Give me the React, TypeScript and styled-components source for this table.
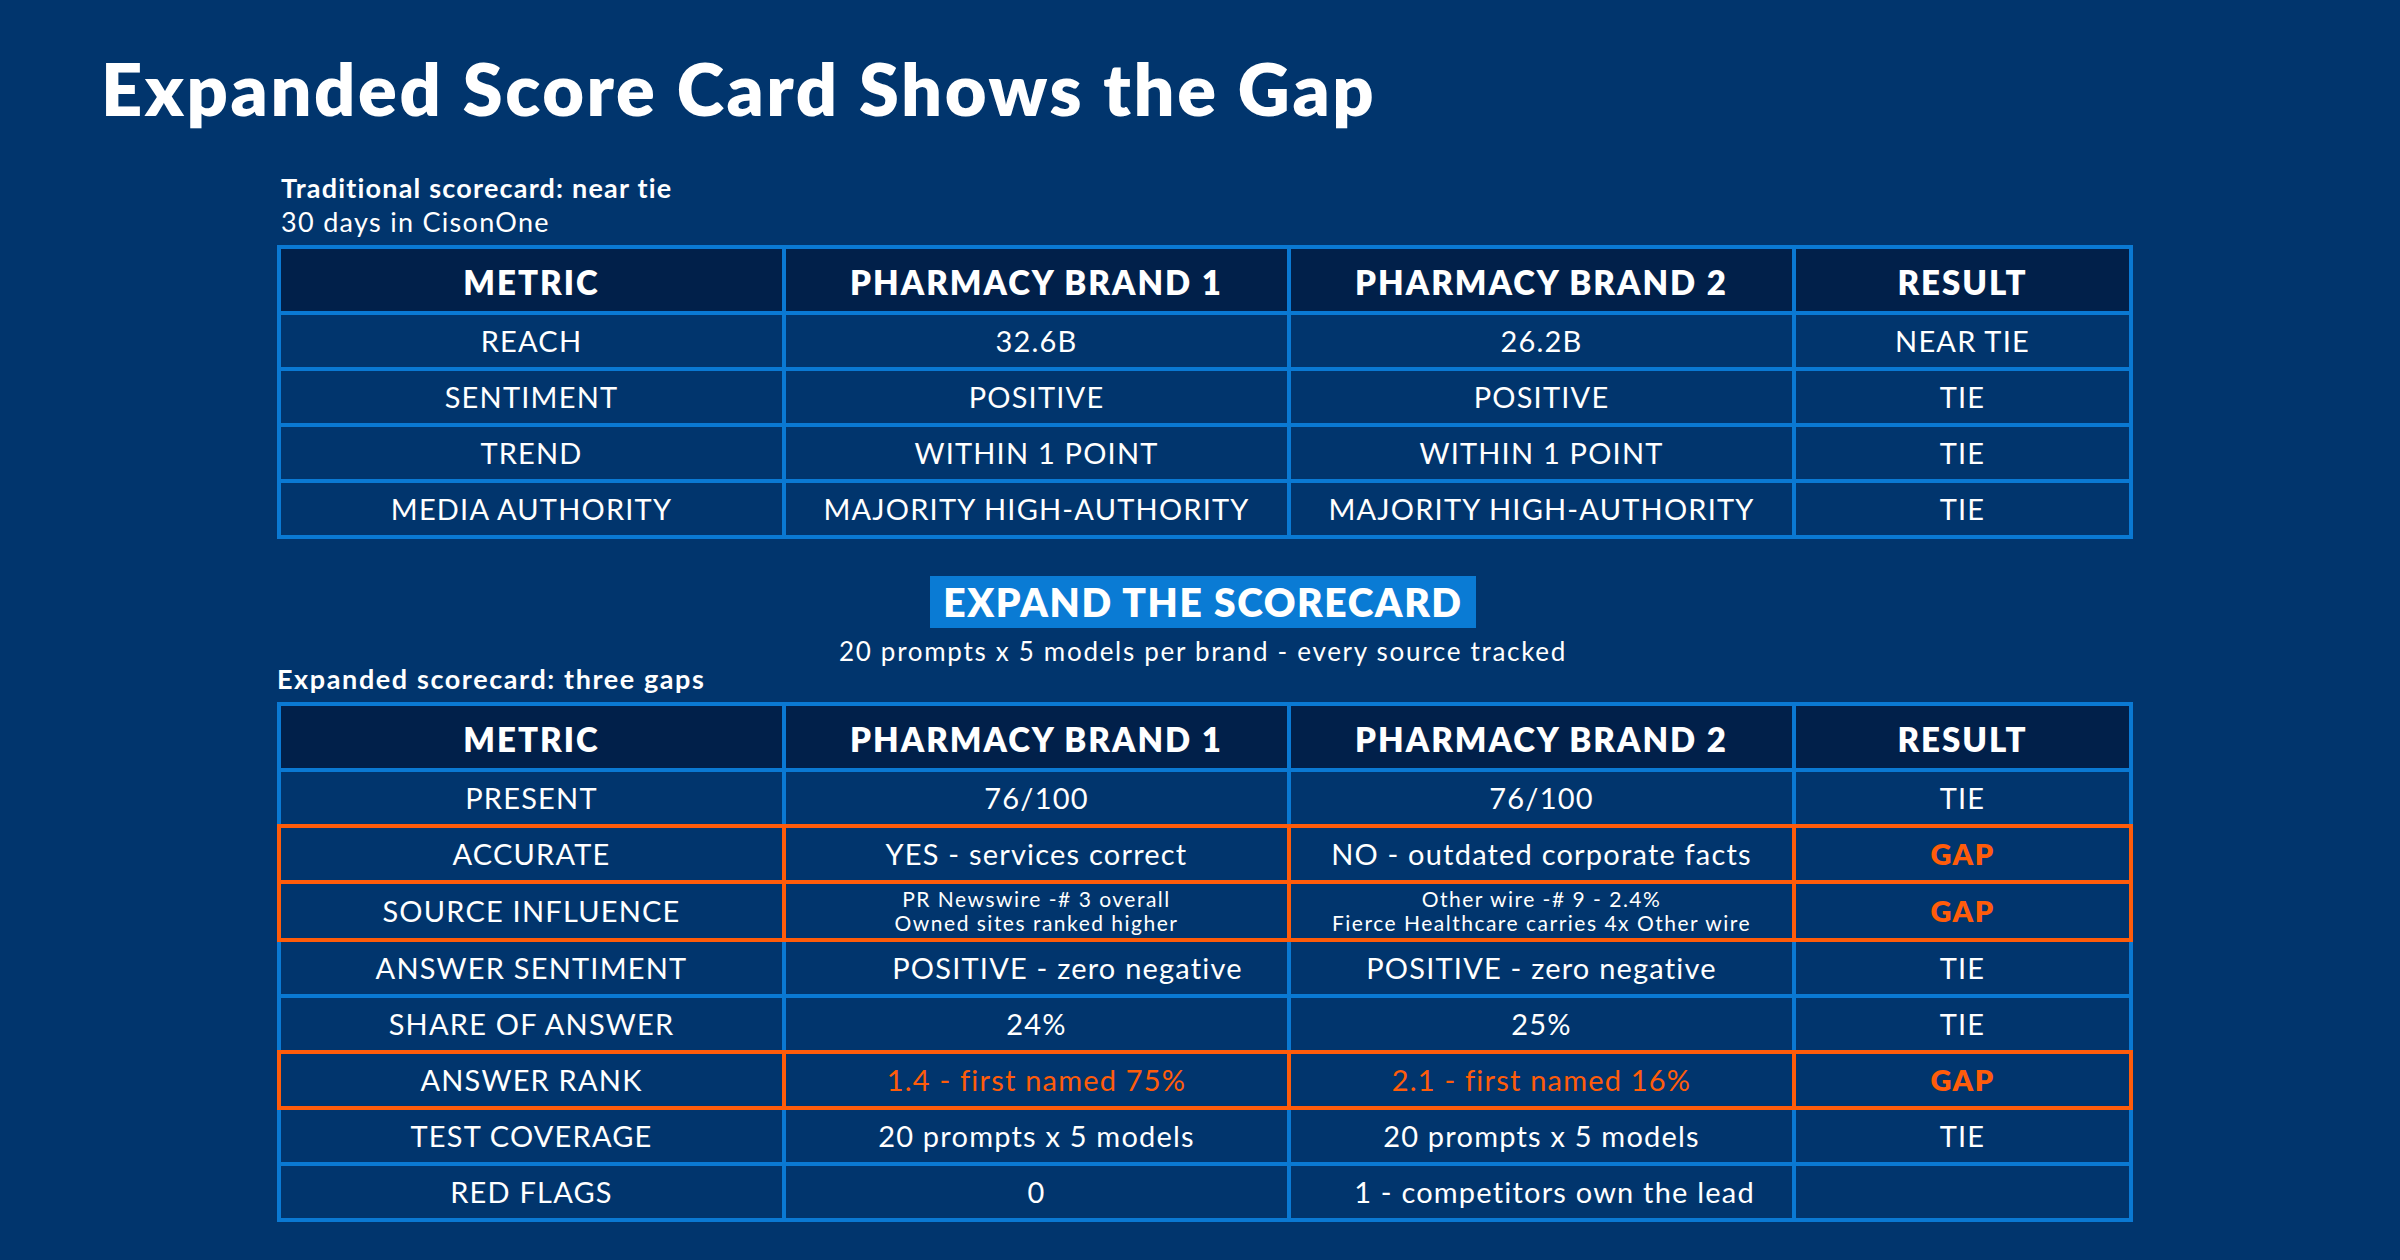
import React from 'react';
import styled, { createGlobalStyle } from 'styled-components';

const BLUE = '#0a79d3';
const ORANGE = '#ff5c0a';

const GlobalStyle = createGlobalStyle`
  html, body {
    margin: 0;
    padding: 0;
    background: #01356d;
  }
  body {
    font-family: Lato, "Open Sans", sans-serif;
    color: #ffffff;
  }
`;

const Page = styled.div`
  width: 2400px;
  height: 1260px;
  box-sizing: border-box;
  padding: 52px 0 0 0;
  background: #01356d;
  overflow: hidden;
`;

const Title = styled.h1`
  margin: 0 0 0 101px;
  font-size: 72px;
  line-height: 72px;
  font-weight: 800;
  letter-spacing: 2.6px;
`;

const Content = styled.div`
  width: 1852px;
  margin-left: 277px;
  display: flex;
  flex-direction: column;
`;

const Caption = styled.div<{ $top?: number; $left?: number; $spacing?: number }>`
  margin-top: ${({ $top }) => $top ?? 0}px;
  padding-left: ${({ $left }) => $left ?? 0}px;
  font-size: 27px;
  line-height: 30px;
  font-weight: 700;
  letter-spacing: ${({ $spacing }) => $spacing ?? 1.2}px;
`;

const SubCaption = styled.div`
  margin-top: 3px;
  padding-left: 4px;
  font-size: 27px;
  line-height: 31px;
  font-weight: 400;
  letter-spacing: 1.3px;
`;

const Table = styled.table<{ $top: number }>`
  margin-top: ${({ $top }) => $top}px;
  width: 1852px;
  border-collapse: collapse;
  table-layout: fixed;
`;

const HeadCell = styled.th`
  height: 58px;
  padding: 4px 0 0 0;
  background: #01204a;
  border: 4px solid ${BLUE};
  font-size: 33px;
  font-weight: 800;
  letter-spacing: 2px;
  text-align: center;
  vertical-align: middle;
`;

const Cell = styled.td<{
  $gap?: boolean;
  $gapBelow?: boolean;
  $height: number;
  $accent?: boolean;
  $bold?: boolean;
  $indent?: number;
}>`
  height: ${({ $height }) => $height}px;
  padding: 0 0 0 ${({ $indent }) => $indent ?? 0}px;
  border: 4px solid ${({ $gap }) => ($gap ? ORANGE : BLUE)};
  border-bottom-color: ${({ $gap, $gapBelow }) => ($gap || $gapBelow ? ORANGE : BLUE)};
  color: ${({ $accent }) => ($accent ? ORANGE : '#ffffff')};
  font-size: 29px;
  font-weight: ${({ $bold }) => ($bold ? 800 : 400)};
  letter-spacing: ${({ $bold }) => ($bold ? 1.5 : 1.2)}px;
  text-align: center;
  vertical-align: middle;
  line-height: 32px;
`;

const SmallLines = styled.div`
  font-size: 21px;
  line-height: 24px;
  letter-spacing: 1.5px;
`;

const ExpandBox = styled.div`
  align-self: center;
  margin-top: 37px;
  height: 52px;
  padding: 0 13px;
  display: flex;
  align-items: center;
  background: #0a7bd4;
  font-size: 39px;
  font-weight: 800;
  letter-spacing: 1.6px;
`;

const ExpandNote = styled.div`
  align-self: center;
  margin-top: 10px;
  font-size: 26px;
  line-height: 26px;
  letter-spacing: 1.7px;
`;

type Row = {
  metric: string;
  a: React.ReactNode;
  b: React.ReactNode;
  result: string;
  gap?: boolean;
  tall?: boolean;
  indentA?: number;
  indentB?: number;
};

const traditional: Row[] = [
  { metric: 'REACH', a: '32.6B', b: '26.2B', result: 'NEAR TIE' },
  { metric: 'SENTIMENT', a: 'POSITIVE', b: 'POSITIVE', result: 'TIE' },
  { metric: 'TREND', a: 'WITHIN 1 POINT', b: 'WITHIN 1 POINT', result: 'TIE' },
  { metric: 'MEDIA AUTHORITY', a: 'MAJORITY HIGH-AUTHORITY', b: 'MAJORITY HIGH-AUTHORITY', result: 'TIE' },
];

const expanded: Row[] = [
  { metric: 'PRESENT', a: '76/100', b: '76/100', result: 'TIE' },
  { metric: 'ACCURATE', a: 'YES - services correct', b: 'NO - outdated corporate facts', result: 'GAP', gap: true },
  {
    metric: 'SOURCE INFLUENCE',
    a: (
      <SmallLines>
        PR Newswire -# 3 overall
        <br />
        Owned sites ranked higher
      </SmallLines>
    ),
    b: (
      <SmallLines>
        Other wire -# 9 - 2.4%
        <br />
        Fierce Healthcare carries 4x Other wire
      </SmallLines>
    ),
    result: 'GAP',
    gap: true,
    tall: true,
  },
  {
    metric: 'ANSWER SENTIMENT',
    a: 'POSITIVE - zero negative',
    b: 'POSITIVE - zero negative',
    result: 'TIE',
    indentA: 62,
  },
  { metric: 'SHARE OF ANSWER', a: '24%', b: '25%', result: 'TIE' },
  { metric: 'ANSWER RANK', a: '1.4 - first named 75%', b: '2.1 - first named 16%', result: 'GAP', gap: true },
  { metric: 'TEST COVERAGE', a: '20 prompts x 5 models', b: '20 prompts x 5 models', result: 'TIE' },
  { metric: 'RED FLAGS', a: '0', b: '1 - competitors own the lead', result: '', indentB: 26 },
];

function ScoreTable({ rows, top, rowHeight }: { rows: Row[]; top: number; rowHeight: number }) {
  return (
    <Table $top={top}>
      <colgroup>
        <col style={{ width: 505 }} />
        <col style={{ width: 505 }} />
        <col style={{ width: 505 }} />
        <col style={{ width: 337 }} />
      </colgroup>
      <thead>
        <tr>
          <HeadCell>METRIC</HeadCell>
          <HeadCell>PHARMACY BRAND 1</HeadCell>
          <HeadCell>PHARMACY BRAND 2</HeadCell>
          <HeadCell>RESULT</HeadCell>
        </tr>
      </thead>
      <tbody>
        {rows.map((row, i) => {
          const gapBelow = !!rows[i + 1]?.gap;
          const shared = {
            $gap: row.gap,
            $gapBelow: gapBelow,
            $height: row.tall ? rowHeight + 2 : rowHeight,
          };
          const rank = row.metric === 'ANSWER RANK';
          return (
            <tr key={row.metric}>
              <Cell {...shared}>{row.metric}</Cell>
              <Cell {...shared} $accent={rank} $indent={row.indentA}>
                {row.a}
              </Cell>
              <Cell {...shared} $accent={rank} $indent={row.indentB}>
                {row.b}
              </Cell>
              <Cell {...shared} $accent={row.gap} $bold={row.gap}>
                {row.result}
              </Cell>
            </tr>
          );
        })}
      </tbody>
    </Table>
  );
}

export default function App() {
  return (
    <Page>
      <GlobalStyle />
      <Title>Expanded Score Card Shows the Gap</Title>
      <Content>
        <Caption $top={49} $left={4}>
          Traditional scorecard: near tie
        </Caption>
        <SubCaption>30 days in CisonOne</SubCaption>
        <ScoreTable rows={traditional} top={8} rowHeight={52} />
        <ExpandBox>EXPAND THE SCORECARD</ExpandBox>
        <ExpandNote>20 prompts x 5 models per brand - every source tracked</ExpandNote>
        <Caption $top={0} $left={-3} $spacing={1.6}>
          Expanded scorecard: three gaps
        </Caption>
        <ScoreTable rows={expanded} top={8} rowHeight={52} />
      </Content>
    </Page>
  );
}
